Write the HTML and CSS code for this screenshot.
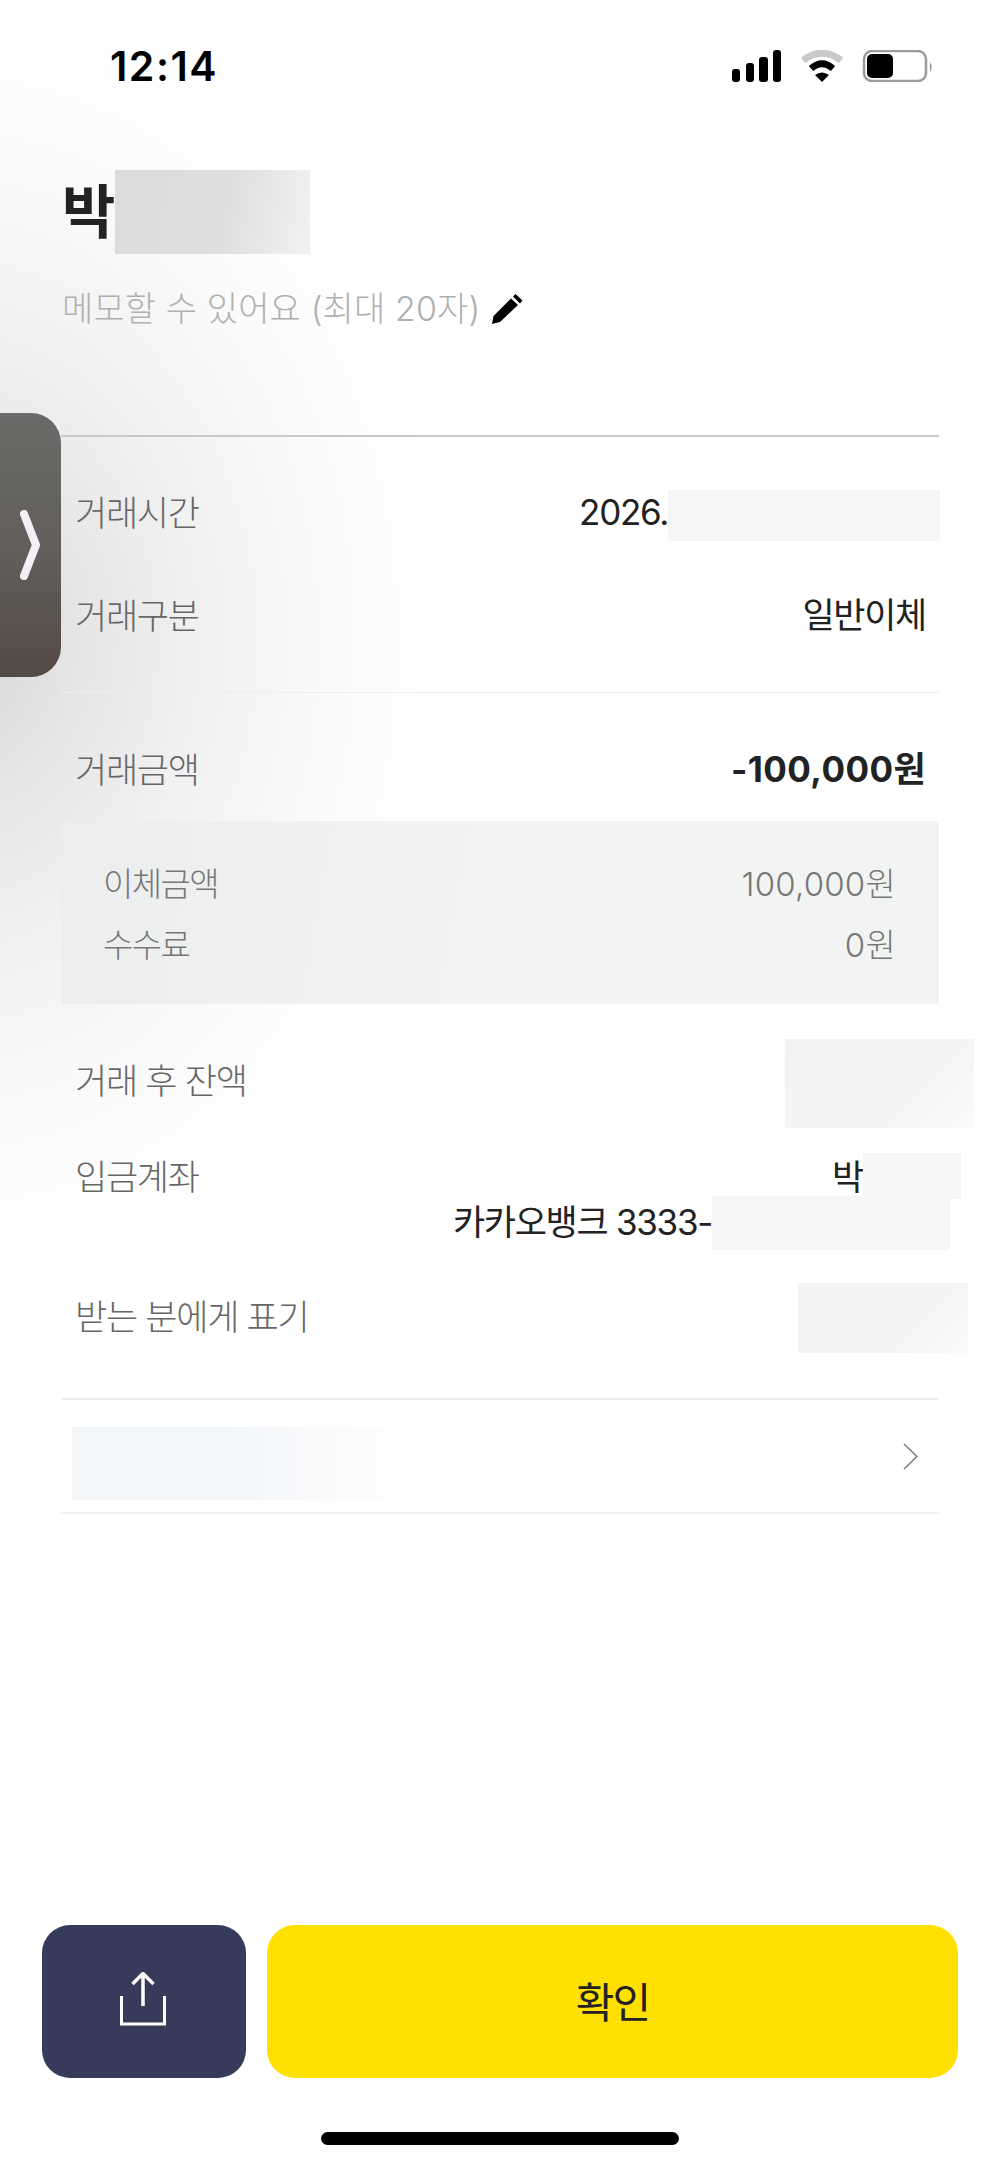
FILE: index.html
```html
<!DOCTYPE html>
<html lang="ko">
<head>
<meta charset="utf-8">
<title>거래 상세</title>
<link rel="stylesheet" href="styles.css">
</head>
<body>
<div class="screen">
  <header class="status">
    <span class="time">12:14</span>
    <svg class="status-icons" width="202" height="32" viewBox="0 0 202 32">
      <rect x="0" y="19" width="8" height="13" rx="3"/>
      <rect x="14" y="13" width="8" height="19" rx="3"/>
      <rect x="27" y="7" width="9" height="25" rx="3"/>
      <rect x="41" y="0" width="8" height="32" rx="3"/>
      <path d="M71 10.500Q90 -4 109 10.500" fill="none" stroke="#c9c9c9" stroke-width="7"/>
      <path d="M79 18.500Q90 9 101 18.500" fill="none" stroke="#000" stroke-width="6.500"/>
      <path d="M83 25Q90 20 97 25L90 32Z"/>
      <rect x="132" y="1" width="62" height="30" rx="8" fill="none" stroke="#9c9c9c" stroke-width="2.500"/>
      <rect x="135" y="4" width="26" height="24" rx="5"/>
      <path d="M198 12Q201 17 198 22Z" fill="#888"/>
    </svg>
  </header>

  <section class="title-block">
    <h1 class="name">박<span class="mask mask-name"></span></h1>
    <p class="memo">메모할 수 있어요 (최대 20자)
      <svg class="pencil" width="31" height="30" viewBox="0 0 31 30"><path d="M0 30l1.500-8L19 4.500l7 6.500L8 28zM21 2.500l2.500-2.500 7 6.500-2.500 3z"/></svg>
    </p>
  </section>

  <main class="content">
    <section class="group group-first">
      <div class="row"><span class="label">거래시간</span><span class="value">2026.<span class="mask mask-date"></span></span></div>
      <div class="row"><span class="label">거래구분</span><span class="value">일반이체</span></div>
    </section>

    <section class="group group-amount">
      <div class="row row-amount"><span class="label">거래금액</span><span class="value value-strong">-100,000원</span></div>
      <div class="breakdown">
        <div class="sub-row"><span>이체금액</span><span class="sub-value">100,000원</span></div>
        <div class="sub-row"><span>수수료</span><span class="sub-value">0원</span></div>
      </div>
    </section>

    <section class="group group-rest">
      <div class="row"><span class="label">거래 후 잔액</span><span class="mask mask-balance"></span></div>
      <div class="row row-account">
        <span class="label">입금계좌</span>
        <span class="value account">
          <span class="account-line">박<span class="mask mask-holder"></span></span>
          <span class="account-line">카카오뱅크 3333-<span class="mask mask-number"></span></span>
        </span>
      </div>
      <div class="row"><span class="label">받는 분에게 표기</span><span class="mask mask-display"></span></div>
    </section>

    <section class="link-row">
      <span class="mask mask-link"></span>
      <svg width="15" height="27" viewBox="0 0 15 27"><path d="M1 1l13 12.500L1 26" fill="none" stroke="#777" stroke-width="1.500"/></svg>
    </section>
  </main>

  <footer class="actions">
    <button class="btn btn-share" type="button" aria-label="공유">
      <svg width="46" height="54" viewBox="0 0 46 54"><path d="M23 1V34M12.500 12L23 1.500 33.500 12" fill="none" stroke="#fff" stroke-width="3.500"/><path d="M1.500 24V52H44.500V24" fill="none" stroke="#fff" stroke-width="3"/></svg>
    </button>
    <button class="btn btn-ok" type="button">확인</button>
  </footer>
  <div class="home-bar"></div>

  <div class="handle">
    <svg width="20" height="70" viewBox="0 0 20 70"><path d="M4 4L16 35 4 66" fill="none" stroke="#f3eff5" stroke-width="8" stroke-linecap="round" stroke-linejoin="round"/></svg>
  </div>
</div>
</body>
</html>
```

FILE: styles.css
```css
* { box-sizing: border-box; }
html, body { margin: 0; padding: 0; }
body { font-family: Inter, "Noto Sans CJK KR", "Noto Sans", sans-serif; color: #222; }

.screen {
  position: relative;
  width: 1000px;
  height: 2165px;
  overflow: hidden;
  display: flex;
  flex-direction: column;
  background: #fff radial-gradient(ellipse 500px 640px at -40px 640px, #d6d6d6 0, #e6e6e6 25%, #f2f2f2 50%, #fafafa 75%, #fefefe 92%, #fff 100%) no-repeat;
}

.status {
  height: 100px;
  padding: 50px 0 0 110px;
  display: flex;
  justify-content: space-between;
  align-items: flex-start;
}
.time {
  font-weight: 600;
  font-size: 41px;
  line-height: 32px;
  color: #000;
  letter-spacing: 1.500px;
}
.status-icons { margin-right: 66px; }

.title-block { padding: 0 62px; height: 335px; }
.name {
  margin: 70px 0 0;
  height: 84px;
  display: flex;
  align-items: center;
  font-size: 58px;
  font-weight: 700;
  line-height: 84px;
  color: #222;
}
.memo {
  margin: 33px 0 0;
  display: flex;
  align-items: center;
  gap: 12px;
  font-size: 34px;
  font-weight: 300;
  line-height: 44px;
  color: #b0b0b0;
  letter-spacing: 0.100px;
}
.pencil { flex: none; }

.mask { display: inline-block; flex: none; }
.mask-name { width: 195px; height: 84px; background: linear-gradient(100deg, #dcdcdc 0, #dedede 55%, #f2f2f2 100%); }

.content { padding: 0 61px; }
.group-first { border-top: 2px solid #c8c8c8; border-bottom: 1px solid #eee; padding: 21px 0 28px; }
.group-amount { padding-top: 22px; }
.group-rest { padding-top: 22px; border-bottom: 2px solid #eee; padding-bottom: 33px; }

.row {
  height: 103px;
  display: flex;
  align-items: center;
  justify-content: space-between;
  padding: 0 13px 0 14px;
}
.row-amount { margin-bottom: 3px; }
.label { padding-top: 6px; font-size: 35px; font-weight: 300; line-height: 44px; color: #666; letter-spacing: -1.300px; }
.value { padding-top: 6px; font-size: 35px; font-weight: 400; line-height: 45px; color: #222; letter-spacing: -1.300px; display: flex; align-items: center; white-space: pre; }
.value-strong { font-weight: 700; letter-spacing: 0.400px; }

.mask-date { width: 272px; height: 51px; margin: 6px -14px 0 0; background: #f6f6f6; }
.mask-balance { width: 189px; height: 89px; margin: 13px -48px 0 0; align-self: flex-start; background: linear-gradient(135deg, #f3f3f3 0, #f5f5f5 70%, #fbfbfb 100%); }
.mask-display { width: 170px; height: 70px; margin: 8px -42px 0 0; background: linear-gradient(135deg, #f3f3f3 0, #f5f5f5 70%, #fbfbfb 100%); }
.mask-holder { width: 98px; height: 46px; margin: 0 -35px 4px 0; background: #f6f6f6; }
.mask-number { width: 238px; height: 54px; margin: 0 -24px 0 0; background: #f6f6f6; }
.mask-link { width: 350px; height: 73px; margin: 14px 0 0 11px; background: linear-gradient(90deg, #f2f6f9 0, #f3f6f9 45%, #fff 100%); }

.breakdown {
  height: 183px;
  padding: 29px 43px 27px 42px;
  background: linear-gradient(100deg, #eceeee 0, #f2f4f3 45%);
}
.sub-row {
  height: 61px;
  display: flex;
  align-items: center;
  justify-content: space-between;
  font-size: 33px;
  font-weight: 300;
  color: #777;
  letter-spacing: -1.600px;
}
.sub-row span { padding-top: 3px; }
.sub-row .sub-value { letter-spacing: 0.200px; }

.row-account { height: 91px; margin: 23px 0 19px; align-items: flex-start; }
.account { flex-direction: column; align-items: flex-end; padding-top: 3px; }
.row-account .label { padding-top: 3px; }
.account-line { display: flex; align-items: center; height: 45px; white-space: pre; }

.link-row {
  height: 114px;
  display: flex;
  align-items: center;
  justify-content: space-between;
  border-bottom: 2px solid #f0f0f0;
  padding-right: 21px;
}

.actions {
  margin-top: auto;
  display: flex;
  gap: 21px;
  padding: 0 42px;
}
.btn { border: 0; height: 153px; border-radius: 28px; padding: 0; font-family: inherit; display: flex; align-items: center; justify-content: center; }
.btn-share { width: 204px; background: #353b58; padding: 0 3px 5px 0; }
.btn-ok { flex: 1; background: #ffe000; font-size: 42px; font-weight: 400; color: #222; letter-spacing: -2px; padding-bottom: 5px; }

.home-bar {
  width: 358px;
  height: 13px;
  margin: 54px auto 20px;
  background: #000;
  border-radius: 7px;
}

.handle {
  position: absolute;
  left: 0;
  top: 413px;
  width: 61px;
  height: 264px;
  border-radius: 0 30px 30px 0;
  background: linear-gradient(180deg, #6a6a68 0, #625f5c 50%, #544a44 100%);
  display: flex;
  align-items: center;
  padding-left: 20px;
}
```
